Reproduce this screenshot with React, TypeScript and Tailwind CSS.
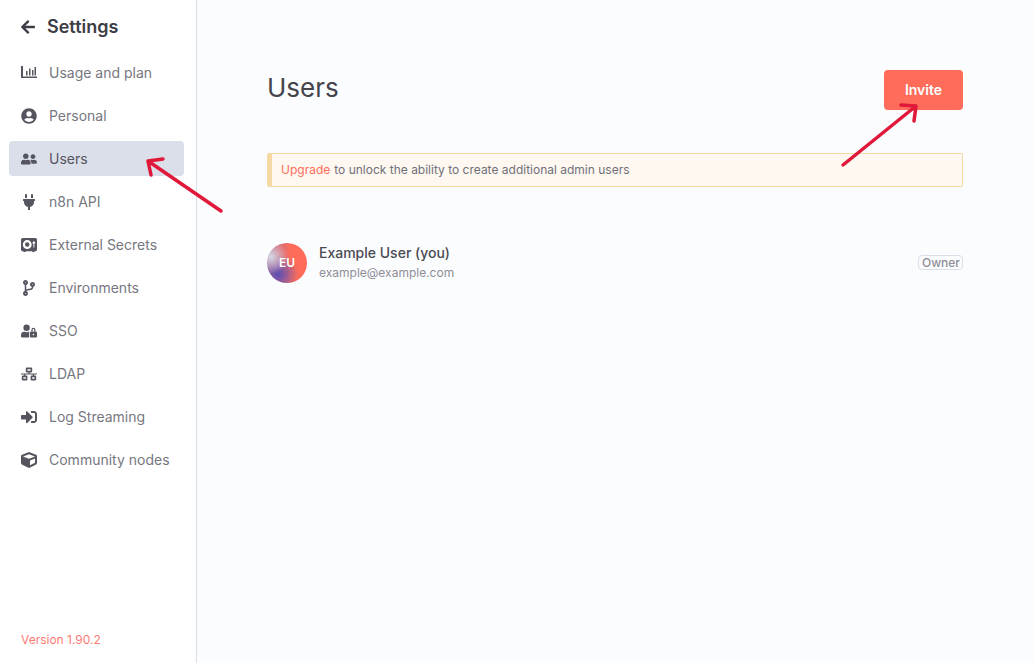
import { FaArrowLeft, FaCodeBranch, FaCube, FaNetworkWired, FaPlug, FaSignInAlt, FaUserCircle, FaUserFriends, FaUserLock } from "react-icons/fa";
import { FaVault } from "react-icons/fa6";
import type { ComponentType } from "react";

function UsageIcon({ className }: { className?: string }) {
  return (
    <svg className={className} viewBox="0 0 16 16" fill="currentColor">
      <path d="M0 1h2v10.4h14V13H0z" />
      <path d="M5 6h1.5v4.4H5zM8 3.5h1.5v6.9H8zM11 5h1.5v5.4H11zM13.5 2H15v8.4h-1.5z" />
    </svg>
  );
}

const navItems: { label: string; icon: ComponentType<{ className?: string }>; active?: boolean }[] = [
  { label: "Usage and plan", icon: UsageIcon },
  { label: "Personal", icon: FaUserCircle },
  { label: "Users", icon: FaUserFriends, active: true },
  { label: "n8n API", icon: FaPlug },
  { label: "External Secrets", icon: FaVault },
  { label: "Environments", icon: FaCodeBranch },
  { label: "SSO", icon: FaUserLock },
  { label: "LDAP", icon: FaNetworkWired },
  { label: "Log Streaming", icon: FaSignInAlt },
  { label: "Community nodes", icon: FaCube },
];

function Sidebar() {
  return (
    <aside className="flex h-full w-[197px] shrink-0 flex-col border-r border-[#d9dee8] bg-white">
      <div className="flex h-[53px] items-center pl-[20px]">
        <FaArrowLeft className="h-[16px] w-[16px] text-[#3d3d45]" />
        <span className="ml-[11px] text-[18px] font-semibold text-[#3d3d45]">Settings</span>
      </div>
      <nav className="mt-[2px] flex flex-col gap-[8px] pl-[9px] pr-[12px]">
        {navItems.map((item) => (
          <div
            key={item.label}
            className={
              item.active
                ? "flex h-[35px] items-center rounded-[4px] bg-[#dbdfe9] pl-[12px] text-[#55555f]"
                : "flex h-[35px] items-center rounded-[4px] pl-[12px] text-[#77777f]"
            }
          >
            <span className="flex w-[16px] justify-center text-[#55555f]">
              <item.icon className="h-[16px] w-[16px]" />
            </span>
            <span className="ml-[12px] text-[14px]">{item.label}</span>
          </div>
        ))}
      </nav>
      <div className="mt-auto pb-[14px] pl-[21px] text-[12px] leading-[18px] text-[#ff7b72]">Version 1.90.2</div>
    </aside>
  );
}

function UserRow() {
  return (
    <div className="mt-[56px] flex items-center">
      <div className="flex h-[40px] w-[40px] items-center justify-center rounded-full bg-[radial-gradient(circle_at_10%_35%,_#d5d8e4_0%,_transparent_38%),radial-gradient(circle_at_28%_78%,_#5b4fb4_0%,_transparent_48%),linear-gradient(90deg,_#b76a90_0%,_#ff6d5a_62%)] text-[12px] font-semibold text-white">
        EU
      </div>
      <div className="ml-[12px] flex flex-col">
        <span className="mb-[2px] text-[14px] leading-[18px] font-medium text-[#4a4a53]">Example User (you)</span>
        <span className="text-[12px] leading-[18px] text-[#8e8e96]">example@example.com</span>
      </div>
      <span className="ml-auto -mt-[1px] rounded-[4px] border border-[#d9dee8] pr-[2px] pl-[3px] text-[12px] leading-[13px] font-medium text-[#8e8e96]">
        Owner
      </span>
    </div>
  );
}

function Arrows() {
  return (
    <svg className="pointer-events-none absolute top-0 left-0 h-[663px] w-[1034px]" viewBox="0 0 1034 663" fill="none" stroke="#e0183a" strokeWidth="3.5" strokeLinecap="round" strokeLinejoin="round">
      <path d="M221 211L148 161M163 159L148 161L151 175" />
      <path d="M843 165L916 106M901 105L916 106L914 121" />
    </svg>
  );
}

export default function App() {
  return (
    <div className="relative flex h-[663px] w-[1034px] overflow-hidden bg-[#fbfcfe] font-['Inter',sans-serif]">
      <Sidebar />
      <main className="min-w-0 flex-1 pt-[70px] pr-[71px] pl-[70px]">
        <div className="flex items-start justify-between">
          <h1 className="text-[26px] leading-[35px] font-normal text-[#44444c]">Users</h1>
          <button className="flex h-[40px] w-[79px] items-center justify-center rounded-[4px] bg-[#ff6d5a] pb-[1px] text-[14px] font-semibold text-white">
            Invite
          </button>
        </div>
        <div className="mt-[43px] flex h-[34px] items-center rounded-[2px] border border-l-[5px] border-[#f5d9a5] bg-[#fef8f0] pl-[9px] text-[12px] text-[#70707a]">
          <span className="text-[#ff6d5a]">Upgrade</span>
          <span className="ml-[4px]">to unlock the ability to create additional admin users</span>
        </div>
        <UserRow />
      </main>
      <Arrows />
    </div>
  );
}
